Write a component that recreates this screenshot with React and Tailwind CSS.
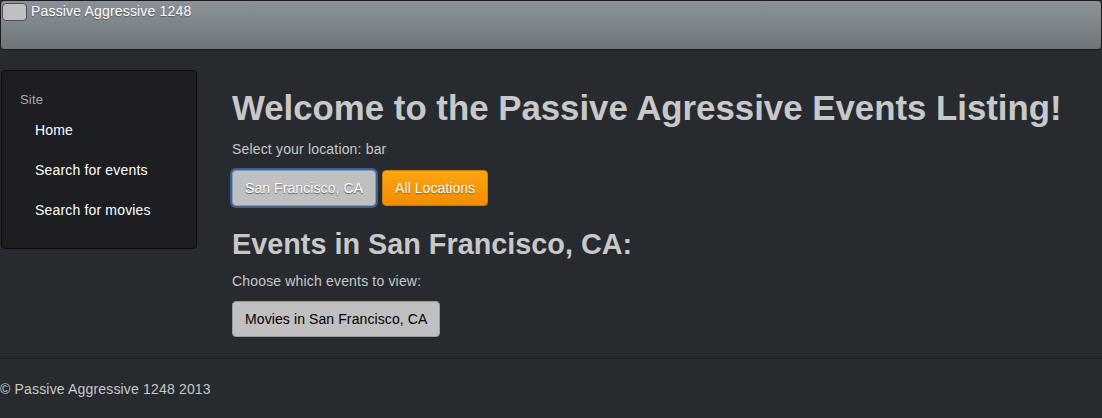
export default function App() {
  return (
    <div className="min-h-screen bg-[#272b30] font-['Liberation_Sans',Arial,sans-serif] text-[14px] leading-[20px] tracking-[0.17px] text-[#c8c8c8]">
      {/* Navbar */}
      <nav className="flex h-[50px] items-start rounded-[4px] border border-[#1a1c1f] bg-[linear-gradient(#8b9197,#7a8288_60%,#6d7479)] pl-[1px]">
        <div className="mt-[2px] h-[18px] w-[25px] rounded-[4px] border border-[#4a4f54] bg-[#c0c0c0]" />
        <span className="ml-[4px] text-[14px] leading-[20px] text-white [text-shadow:0_1px_1px_rgba(0,0,0,0.35)]">
          Passive Aggressive 1248
        </span>
      </nav>

      {/* Body row */}
      <div className="mt-[20px] flex items-start">
        <aside className="ml-[1px] w-[196px] rounded-[4px] border border-[#0c0d0e] bg-[#1c1e22] pt-[19px] pb-[18px]">
          <div className="pl-[18px] text-[13px] leading-[20px] text-[#aaaaaa]">Site</div>
          <ul>
            <li className="py-[10px] pl-[33px] text-white">Home</li>
            <li className="py-[10px] pl-[33px] text-white">Search for events</li>
            <li className="py-[10px] pl-[33px] text-white">Search for movies</li>
          </ul>
        </aside>

        <main className="ml-[35px] flex-1 pt-[18px]">
          <h1 className="text-[34.8px] font-bold leading-[40px] tracking-normal text-[#c8c8c8]">
            Welcome to the Passive Agressive Events Listing!
          </h1>
          <p className="mt-[11px]">Select your location: bar</p>
          <div className="mt-[11px] flex items-center gap-[6px]">
            <button className="h-[36px] rounded-[4px] border border-[#7f9cc4] bg-[#c0c0c0] px-[12px] text-[14px] tracking-[0.08px] text-white shadow-[0_0_0_2px_#3f5f8a] [text-shadow:0_1px_1px_rgba(0,0,0,0.55)]">
              San Francisco, CA
            </button>
            <button className="h-[36px] rounded-[4px] border border-[#d27f00] bg-[linear-gradient(#faa615,#f08d00)] px-[12px] text-[14px] tracking-[0.05px] text-white [text-shadow:0_1px_1px_rgba(0,0,0,0.4)]">
              All Locations
            </button>
          </div>
          <h2 className="mt-[18px] text-[28.8px] font-bold leading-[40px] tracking-normal text-[#c8c8c8]">
            Events in San Francisco, CA:
          </h2>
          <p className="mt-[7px]">Choose which events to view:</p>
          <div className="mt-[10px]">
            <button className="h-[36px] rounded-[4px] border border-[#9a9a9a] bg-[#c0c0c0] px-[12px] text-[14px] tracking-[0.1px] text-black">
              Movies in San Francisco, CA
            </button>
          </div>
        </main>
      </div>

      {/* Footer */}
      <div className="mt-[21px] border-t border-[#1c1e22] pt-[20px]">
        <p>© Passive Aggressive 1248 2013</p>
      </div>
    </div>
  );
}
